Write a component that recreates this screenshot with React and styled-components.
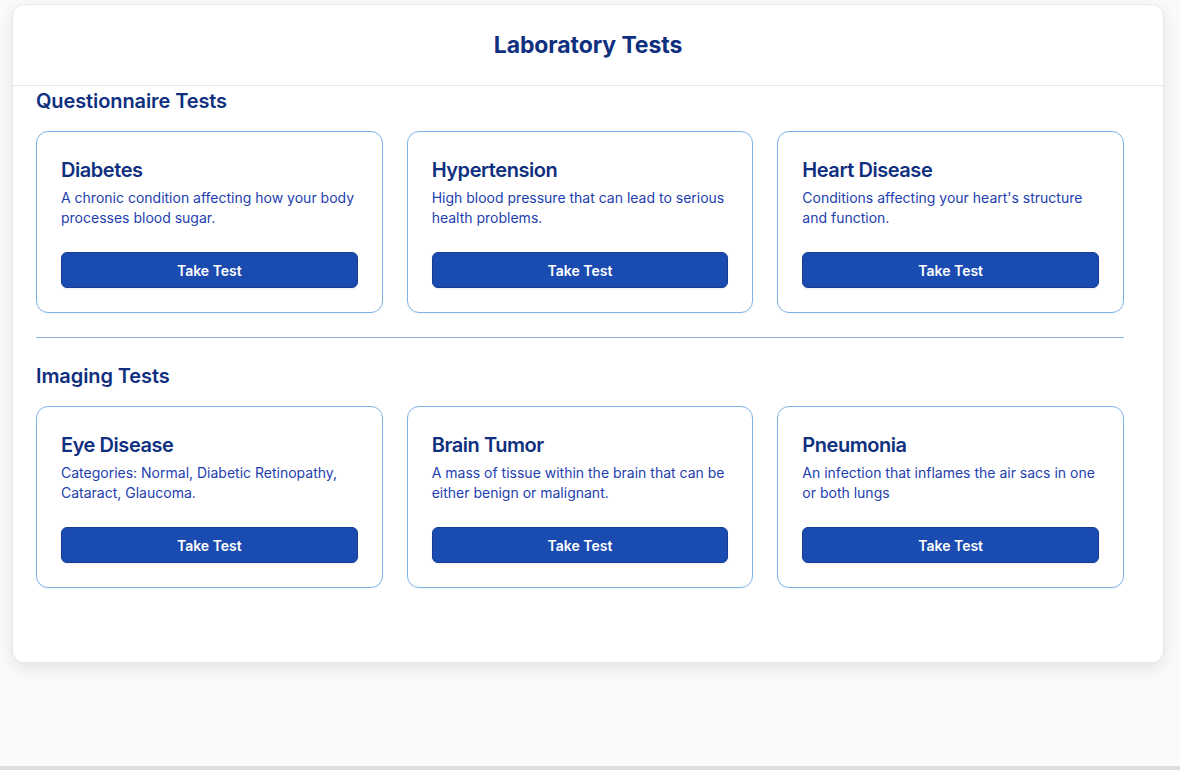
import React from "react";
import styled, { createGlobalStyle } from "styled-components";

const Global = createGlobalStyle`
  html, body { margin: 0; padding: 0; }
  body {
    background: #f9fafb;
    font-family: Inter, "Noto Sans", sans-serif;
    -webkit-font-smoothing: antialiased;
  }
`;

const Page = styled.div`
  min-height: 770px;
  box-sizing: border-box;
  padding-top: 4px;
  border-bottom: 4px solid #dcdee0;
`;

const Panel = styled.div`
  width: 1152px;
  margin-left: 12px;
  box-sizing: border-box;
  background: #fff;
  border: 1px solid #e5e7eb;
  border-radius: 12px;
  box-shadow: 0 6px 16px rgba(0, 0, 0, 0.09);
  padding-bottom: 74px;
`;

const Header = styled.header`
  height: 80px;
  display: flex;
  align-items: center;
  justify-content: center;
  border-bottom: 1px solid #e5e7eb;
`;

const Title = styled.h1`
  margin: 0;
  font-size: 23px;
  font-weight: 700;
  color: #0f2f7f;
  letter-spacing: -0.1px;
`;

const Body = styled.div`
  padding: 1px 39px 0 23px;
`;

const SectionTitle = styled.h2`
  margin: 0 0 16px;
  font-size: 20px;
  line-height: 28px;
  font-weight: 600;
  color: #0f2f7f;
  letter-spacing: -0.1px;
`;

const Grid = styled.div`
  display: grid;
  grid-template-columns: repeat(3, 1fr);
  gap: 24px;
`;

const Card = styled.div`
  border: 1px solid #7fb2e8;
  border-radius: 12px;
  padding: 24px;
  display: flex;
  flex-direction: column;
  box-shadow: 0 1px 2px rgba(30, 64, 175, 0.06);
`;

const CardTitle = styled.h3`
  margin: 0;
  font-size: 20px;
  line-height: 28px;
  font-weight: 600;
  color: #0f2f7f;
  letter-spacing: -0.45px;
`;

const CardText = styled.p`
  margin: 4px 0 0;
  font-size: 14px;
  line-height: 20px;
  color: #1e40af;
  min-height: 40px;
`;

const Button = styled.button`
  margin-top: 24px;
  height: 36px;
  border: 1px solid #163c96;
  border-radius: 6px;
  background: #1a4bb1;
  color: #fff;
  font-family: inherit;
  font-size: 14px;
  font-weight: 600;
  box-shadow: 0 1px 2px rgba(0, 0, 0, 0.08);
  cursor: pointer;
`;

const Divider = styled.hr`
  margin: 24px 0 24px;
  border: none;
  border-top: 1px solid #8fb0d8;
`;

const questionnaire = [
  { t: "Diabetes", d: "A chronic condition affecting how your body processes blood sugar." },
  { t: "Hypertension", d: "High blood pressure that can lead to serious health problems." },
  { t: "Heart Disease", d: "Conditions affecting your heart's structure and function." },
];

const imaging = [
  { t: "Eye Disease", d: "Categories: Normal, Diabetic Retinopathy, Cataract, Glaucoma." },
  { t: "Brain Tumor", d: "A mass of tissue within the brain that can be either benign or malignant." },
  { t: "Pneumonia", d: "An infection that inflames the air sacs in one or both lungs" },
];

const TestGrid = ({ items }) => (
  <Grid>
    {items.map((it) => (
      <Card key={it.t}>
        <CardTitle>{it.t}</CardTitle>
        <CardText>{it.d}</CardText>
        <Button>Take Test</Button>
      </Card>
    ))}
  </Grid>
);

export default function App() {
  return (
    <>
      <Global />
      <Page>
        <Panel>
          <Header>
            <Title>Laboratory Tests</Title>
          </Header>
          <Body>
            <SectionTitle>Questionnaire Tests</SectionTitle>
            <TestGrid items={questionnaire} />
            <Divider />
            <SectionTitle>Imaging Tests</SectionTitle>
            <TestGrid items={imaging} />
          </Body>
        </Panel>
      </Page>
    </>
  );
}
